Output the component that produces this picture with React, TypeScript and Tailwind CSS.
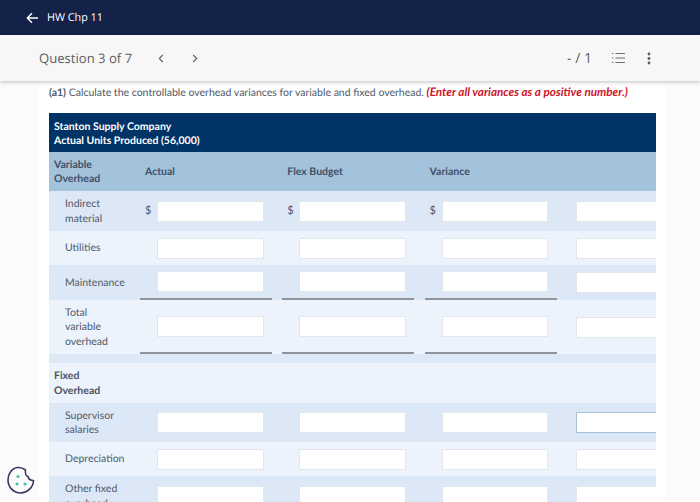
import React from "react";

const lato = "font-['Lato','Liberation_Sans',sans-serif]";

function Box({ dollar, line }: { dollar?: boolean; line?: boolean }) {
  return (
    <div className={`w-[132px] mr-[10.3px] shrink-0 self-stretch flex items-center ${line ? "border-b-2 border-[#8f939b]" : ""}`}>
      <span className="w-[17px] pl-[5px] text-[11px] text-[#4a5568]">{dollar ? "$" : ""}</span>
      <div className="w-[106.5px] h-[21px] bg-white border border-[#e3e6ea]" />
    </div>
  );
}

function Row({
  label,
  h,
  bg,
  dollar,
  line,
  focus,
}: {
  label: React.ReactNode;
  h: string;
  bg: string;
  dollar?: boolean;
  line?: boolean;
  focus?: boolean;
}) {
  return (
    <div className={`flex items-center overflow-hidden ${h} ${bg}`}>
      <div className="w-[91px] shrink-0 pl-[16px] pt-[1px] text-[10.5px] leading-[14.3px] text-[#4f5a68]">{label}</div>
      <Box dollar={dollar} line={line} />
      <Box dollar={dollar} line={line} />
      <Box dollar={dollar} line={line} />
      <div
        className={`ml-[9px] w-[90px] h-[21px] shrink-0 bg-white border ${focus ? "border-[#a9c1d8]" : "border-[#e3e6ea]"}`}
      />
    </div>
  );
}

export default function App() {
  return (
    <div className={`w-[700px] h-[502px] overflow-hidden relative bg-[#fbfbfc] [text-rendering:geometricPrecision] ${lato}`}>
      <header className="h-[35px] bg-[#14224a] flex items-center pl-[26px] text-white">
        <svg width="13" height="12" viewBox="0 0 13 12" fill="none" stroke="currentColor" strokeWidth="1.4">
          <path d="M12 6H1.5M6 1.2 1.3 6 6 10.8" />
        </svg>
        <span className="ml-[8px] pt-[1px] text-[10.8px] font-['Open_Sans',sans-serif] font-medium">HW Chp 11</span>
      </header>
      <div className="relative z-10 h-[46px] bg-[#f7f7f7] shadow-[0_1px_4px_rgba(0,0,0,0.25)] flex items-center pl-[39px] pr-[49px] text-[#5a5f66]">
        <span className="text-[13.1px] pt-[2px] font-['Open_Sans',sans-serif]">Question 3 of 7</span>
        <svg className="ml-[26px]" width="6" height="9" viewBox="0 0 6 9" fill="none" stroke="currentColor" strokeWidth="1.1">
          <path d="M4.8 1 1.3 4.5l3.5 3.5" />
        </svg>
        <svg className="ml-[28px]" width="6" height="9" viewBox="0 0 6 9" fill="none" stroke="currentColor" strokeWidth="1.1">
          <path d="M1.2 1l3.5 3.5L1.2 8" />
        </svg>
        <span className="ml-auto text-[14px] font-['Open_Sans',sans-serif]">- / 1</span>
        <svg className="ml-[20px]" width="13" height="12" viewBox="0 0 13 12" fill="none" stroke="#6b7075" strokeWidth="1">
          <path d="M3.5 1.500H13M3.500 6H13M3.500 10.500H13" />
          <path d="M0 1.500H2M0 6H2M0 10.500H2" strokeDasharray="1 .6" />
        </svg>
        <svg className="ml-[22px]" width="4" height="13" viewBox="0 0 4 13" fill="#5a5f66">
          <circle cx="2" cy="2" r="1.4" />
          <circle cx="2" cy="6.500" r="1.4" />
          <circle cx="2" cy="11" r="1.4" />
        </svg>
      </div>
      <main className="mx-[39px] w-[626px] h-[421px] bg-white px-[10px] overflow-hidden">
        <p className="pt-[3.500px] h-[32px] text-[10.5px] leading-[15px] text-[#4f5a68] whitespace-nowrap">
          <b className="font-bold">(a1)</b> Calculate the controllable overhead variances for variable and fixed overhead.{" "}
          <b className="font-bold italic text-[11.7px] text-[#d0142c]">(Enter all variances as a positive number.)</b>
        </p>
        <div className="w-[607px]">
          <div className="h-[39px] bg-[#003366] text-white text-[10.5px] leading-[14.3px] font-bold pl-[5px] pt-[6.500px]">
            Stanton Supply Company
            <br />
            Actual Units Produced (56,000)
          </div>
          <div className="h-[39px] bg-[#a3c3dc] flex items-center text-[10.5px] leading-[14.3px] font-bold text-[#3f5068]">
            <div className="w-[91px] pl-[5px] pt-[1px] shrink-0">
              Variable
              <br />
              Overhead
            </div>
            <div className="w-[142.3px] pl-[5px] pt-[1px] shrink-0">Actual</div>
            <div className="w-[142.3px] pl-[5px] pt-[1px] shrink-0">Flex Budget</div>
            <div className="pl-[5px] pt-[1px]">Variance</div>
          </div>
          <Row h="h-[40px]" bg="bg-[#dde8f7]" dollar label={<>Indirect<br />material</>} />
          <Row h="h-[34px]" bg="bg-[#ecf3fd]" label="Utilities" />
          <Row h="h-[35px]" bg="bg-[#dde8f7]" line label="Maintenance" />
          <Row h="h-[54px]" bg="bg-[#ecf3fd]" line label={<>Total<br />variable<br />overhead</>} />
          <div className="h-[9px] bg-[#dde8f7]" />
          <div className="h-[40px] bg-[#ecf3fd] flex items-center pl-[5px] pt-[1px] text-[10.5px] leading-[14.3px] font-bold text-[#4a5361]">
            <div>
              Fixed
              <br />
              Overhead
            </div>
          </div>
          <Row h="h-[39px]" bg="bg-[#dde8f7]" focus label={<>Supervisor<br />salaries</>} />
          <Row h="h-[34px]" bg="bg-[#ecf3fd]" label="Depreciation" />
          <Row h="h-[40px]" bg="bg-[#dde8f7]" label={<>Other fixed<br />overhead</>} />
        </div>
      </main>
      <svg className="absolute left-[7px] top-[466px]" width="28" height="28" viewBox="0 0 28 28" fill="none">
        <path
          d="M11 1.500C5 2 1 7.500 1 14C1 21 6.500 27 13.500 27C20.500 27 26.500 21 26.500 14.500C24 14.500 21.500 13 21 10.500C19 10 18 7 18.500 4C16.500 2.500 13.500 1.300 11 1.500Z"
          stroke="#3a3560"
          strokeWidth="1.6"
          strokeLinejoin="round"
        />
        <circle cx="11" cy="10.500" r="1.500" fill="#3fc3a4" />
        <circle cx="10" cy="18" r="1.500" fill="#3fc3a4" />
        <circle cx="18" cy="18" r="1.500" fill="#3fc3a4" />
      </svg>
    </div>
  );
}
